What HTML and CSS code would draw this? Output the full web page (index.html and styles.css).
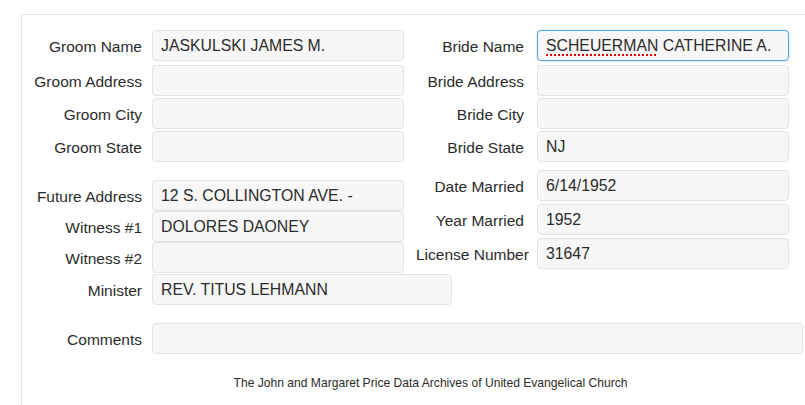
FILE: index.html
```html
<!DOCTYPE html>
<html lang="en">
<head>
<meta charset="utf-8">
<title>Marriage Record</title>
<link rel="stylesheet" href="styles.css">
</head>
<body>
<div class="panel">
  <div class="sec top">
    <div class="col col-l">
      <div class="row"><span class="lbl">Groom Name</span><div class="field">JASKULSKI JAMES M.</div></div>
      <div class="row"><span class="lbl">Groom Address</span><div class="field"></div></div>
      <div class="row"><span class="lbl">Groom City</span><div class="field"></div></div>
      <div class="row"><span class="lbl">Groom State</span><div class="field"></div></div>
    </div>
    <div class="col col-r">
      <div class="row"><span class="lbl">Bride Name</span><div class="field focus"><span class="misspelled">SCHEUERMAN</span> CATHERINE A.</div></div>
      <div class="row"><span class="lbl">Bride Address</span><div class="field"></div></div>
      <div class="row"><span class="lbl">Bride City</span><div class="field"></div></div>
      <div class="row"><span class="lbl">Bride State</span><div class="field">NJ</div></div>
    </div>
  </div>
  <div class="sec mid">
    <div class="col col-l">
      <div class="row"><span class="lbl">Future Address</span><div class="field">12 S. COLLINGTON AVE. -</div></div>
      <div class="row"><span class="lbl">Witness #1</span><div class="field">DOLORES DAONEY</div></div>
      <div class="row"><span class="lbl">Witness #2</span><div class="field"></div></div>
    </div>
    <div class="col col-r">
      <div class="row"><span class="lbl">Date Married</span><div class="field">6/14/1952</div></div>
      <div class="row"><span class="lbl">Year Married</span><div class="field">1952</div></div>
      <div class="row"><span class="lbl">License Number</span><div class="field">31647</div></div>
    </div>
  </div>
  <div class="row single minister"><span class="lbl">Minister</span><div class="field">REV. TITUS LEHMANN</div></div>
  <div class="row single comments"><span class="lbl">Comments</span><div class="field"></div></div>
  <footer class="foot">The John and Margaret Price Data Archives of United Evangelical Church</footer>
</div>
</body>
</html>
```

FILE: styles.css
```css
html, body {
  margin: 0;
  overflow: hidden;
  background: #fff;
}
body {
  font-family: "Liberation Sans", Arial, sans-serif;
  color: #2b2b2b;
}
.panel {
  margin: 14px 0 0 21px;
  width: 818px;
  min-height: 400px;
  box-sizing: border-box;
  border-top: 1px solid #e6e6e6;
  border-left: 1px solid #e6e6e6;
  padding-top: 15px;
}
.sec {
  display: flex;
  gap: 12px;
}
.col {
  display: flex;
  flex-direction: column;
  gap: 2px;
}
.top .row:first-child {
  margin-bottom: 2px;
}
.mid {
  margin-top: 8px;
}
.mid .col-l {
  padding-top: 10px;
  gap: 0;
}
.mid .col-r {
  gap: 3px;
}
.row {
  display: flex;
  align-items: center;
  gap: 10px;
}
.col-r .row {
  gap: 13px;
}
.lbl {
  flex: none;
  width: 120px;
  font-size: 15.5px;
  text-align: right;
  white-space: nowrap;
  padding-top: 2px;
}
.col-r .lbl {
  width: 108px;
}
.field {
  flex: none;
  width: 252px;
  height: 31px;
  box-sizing: border-box;
  border: 1px solid #e3e3e3;
  border-radius: 4px;
  background: #f7f7f7;
  padding: 0 8px;
  font-size: 15.8px;
  line-height: 29px;
  white-space: nowrap;
  overflow: hidden;
  color: #2b2b2b;
}
.field.focus {
  border-color: #5aa6e3;
  box-shadow: 0 0 2px rgba(102, 175, 233, 0.6);
}
.misspelled {
  text-decoration: underline dotted #e00000;
  text-decoration-thickness: 2px;
  text-underline-offset: 3px;
}
.minister {
  margin-top: 1px;
}
.minister .field {
  width: 300px;
}
.comments {
  margin-top: 18px;
}
.comments .field {
  width: 651px;
}
.foot {
  margin-top: 22px;
  font-size: 12.1px;
  line-height: 14px;
  text-align: center;
  color: #2b2b2b;
}
```
